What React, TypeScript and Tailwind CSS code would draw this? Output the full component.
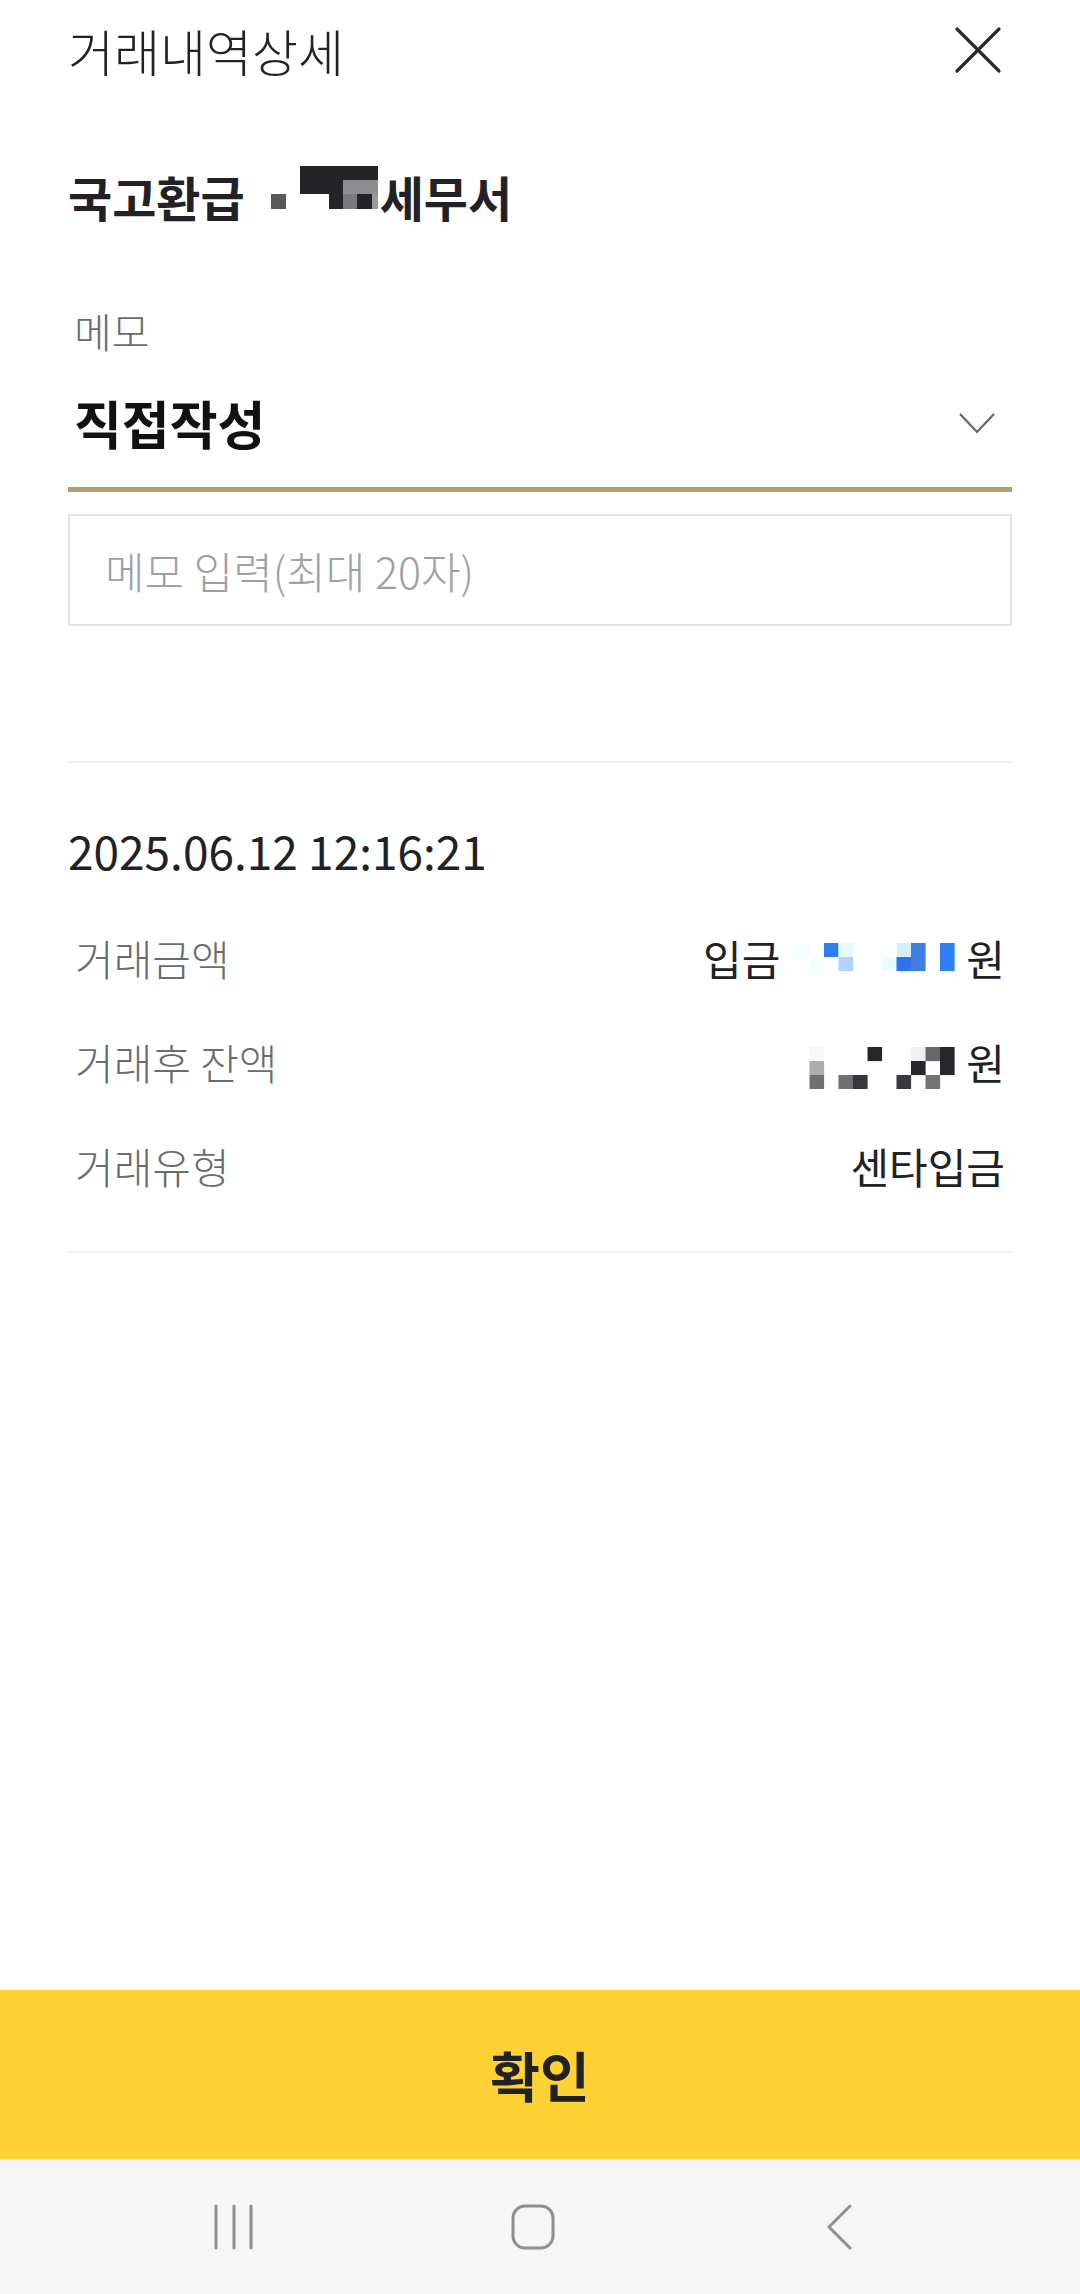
import React from "react";

type Cell = [number, number, string];

// redacted pixel blocks from the capture, cols x rows on a ~14.5px grid
const amountCells: Cell[] = [
  [0, 0, "#f5ffff"], [2, 0, "#2f7cf0"], [3, 0, "#e6fbff"], [7, 0, "#d5f0fb"], [8, 0, "#3e7edf"], [10, 0, "#2f7ff5"],
  [1, 1, "#f3ffff"], [3, 1, "#b0d4ff"], [6, 1, "#e9fcff"], [7, 1, "#2f73e8"], [8, 1, "#3e7edf"], [10, 1, "#2f7ff5"],
];

const balanceCells: Cell[] = [
  [1, 0, "#f8f8f8"], [5, 0, "#26272b"], [8, 0, "#eff0f2"], [9, 0, "#66676b"], [10, 0, "#26272b"],
  [1, 1, "#acadaf"], [8, 1, "#26272b"], [10, 1, "#26272b"],
  [1, 2, "#707074"], [3, 2, "#707074"], [4, 2, "#38383b"], [7, 2, "#3a3a3e"], [9, 2, "#737376"],
];

const PixelBlur = ({ cells }: { cells: Cell[] }) => (
  <svg width="160" height="42" viewBox="0 0 160 42" className="shrink-0">
    {cells.map(([c, r, fill], i) => (
      <rect key={i} x={c * 14.5} y={r * 14} width="14.6" height="14.1" fill={fill} />
    ))}
  </svg>
);

const NameBlur = () => (
  <svg width="107" height="43" viewBox="0 0 107 43" className="shrink-0 -translate-y-[9px]">
    <rect x="0" y="28" width="15" height="15" fill="#58585a" />
    <rect x="29" y="0" width="78" height="14" fill="#242427" />
    <rect x="29" y="14" width="29" height="14" fill="#242427" />
    <rect x="58" y="14" width="14" height="29" fill="#242427" />
    <rect x="72" y="14" width="35" height="14" fill="#8f8f91" />
    <rect x="72" y="28" width="14" height="15" fill="#7a7a7c" />
    <rect x="86" y="28" width="15" height="15" fill="#242427" />
    <rect x="101" y="28" width="6" height="15" fill="#9a9a9c" />
  </svg>
);

const InfoRow = ({ label, children }: { label: string; children: React.ReactNode }) => (
  <div className="flex h-[104px] items-center justify-between px-[7px]">
    <span className="text-[42px] font-light text-[#6b6b6f]">{label}</span>
    <div className="flex items-center text-[42px] text-[#222226]">{children}</div>
  </div>
);

export default function App() {
  return (
    <div className="flex h-[2294px] w-[1080px] flex-col overflow-hidden bg-white font-['Noto_Sans_CJK_KR','Noto_Sans',sans-serif] leading-none">
      <div className="flex-1 px-[68px]">
        {/* header */}
        <div className="flex h-[100px] items-center justify-between">
          <h1 className="text-[50px] font-light text-[#222226]">거래내역상세</h1>
          <svg width="48" height="48" viewBox="0 0 48 48" className="mr-[10px]">
            <path d="M3 3 L45 45 M45 3 L3 45" stroke="#2a2a2d" strokeWidth="3.2" strokeLinecap="round" />
          </svg>
        </div>

        <div className="mt-[70px] flex h-[52px] items-center text-[48px] font-bold text-[#222226]">
          <span>국고환급</span>
          <span className="ml-[26px]">
            <NameBlur />
          </span>
          <span className="ml-[2px]">세무서</span>
        </div>

        {/* memo */}
        <div className="mt-[86px] flex h-[44px] items-center pl-[6px] text-[41px] font-light text-[#6b6b6f]">메모</div>
        <div className="mt-[41px] flex h-[60px] items-center justify-between pl-[6px]">
          <span className="text-[52px] font-bold text-[#111114]">직접작성</span>
          <svg width="36" height="22" viewBox="0 0 36 22" className="mr-[17px]">
            <path d="M1 2 L18 20 L35 2" fill="none" stroke="#66666a" strokeWidth="2.2" />
          </svg>
        </div>
        <div className="mt-[34px] h-[5px] bg-[#b19d73]" />

        <div className="mt-[22px] flex h-[112px] items-center border-2 border-[#e3e4e6] pl-[35px]">
          <span className="text-[43px] font-light text-[#a0a0a3]">메모 입력(최대 20자)</span>
        </div>

        <div className="mt-[135px] h-[2px] bg-[#f0f0f2]" />

        {/* transaction info */}
        <div className="mt-[57px] flex h-[60px] items-center text-[46px] text-[#222226]">2025.06.12 12:16:21</div>

        <div className="mt-[26px]">
          <InfoRow label="거래금액">
            <span>입금</span>
            <span className="ml-[15px] mt-[12px]">
              <PixelBlur cells={amountCells} />
            </span>
            <span className="ml-[11px]">원</span>
          </InfoRow>
          <InfoRow label="거래후 잔액">
            <span className="mt-[12px]">
              <PixelBlur cells={balanceCells} />
            </span>
            <span className="ml-[11px]">원</span>
          </InfoRow>
          <InfoRow label="거래유형">
            <span>센타입금</span>
          </InfoRow>
        </div>

        <div className="mt-[33px] h-[2px] bg-[#f0f0f2]" />
      </div>

      <button className="flex h-[169px] w-full items-center justify-center bg-[#fed234] text-[54px] font-bold text-[#222226]">
        확인
      </button>

      {/* android nav bar */}
      <div className="flex h-[135px] items-center bg-[#f6f6f6] pl-[212px]">
        <svg width="44" height="46" viewBox="0 0 44 46">
          <path d="M4 2 V44 M22 2 V44 M39 2 V44" stroke="#8e8e90" strokeWidth="3" strokeLinecap="round" />
        </svg>
        <svg width="46" height="46" viewBox="0 0 46 46" className="ml-[255px]">
          <rect x="2" y="2" width="40" height="42" rx="12" fill="none" stroke="#8e8e90" strokeWidth="3" />
        </svg>
        <svg width="28" height="46" viewBox="0 0 28 46" className="ml-[268px]">
          <path d="M25 2 L4 23 L25 44" fill="none" stroke="#8e8e90" strokeWidth="3" strokeLinecap="round" strokeLinejoin="round" />
        </svg>
      </div>
    </div>
  );
}
